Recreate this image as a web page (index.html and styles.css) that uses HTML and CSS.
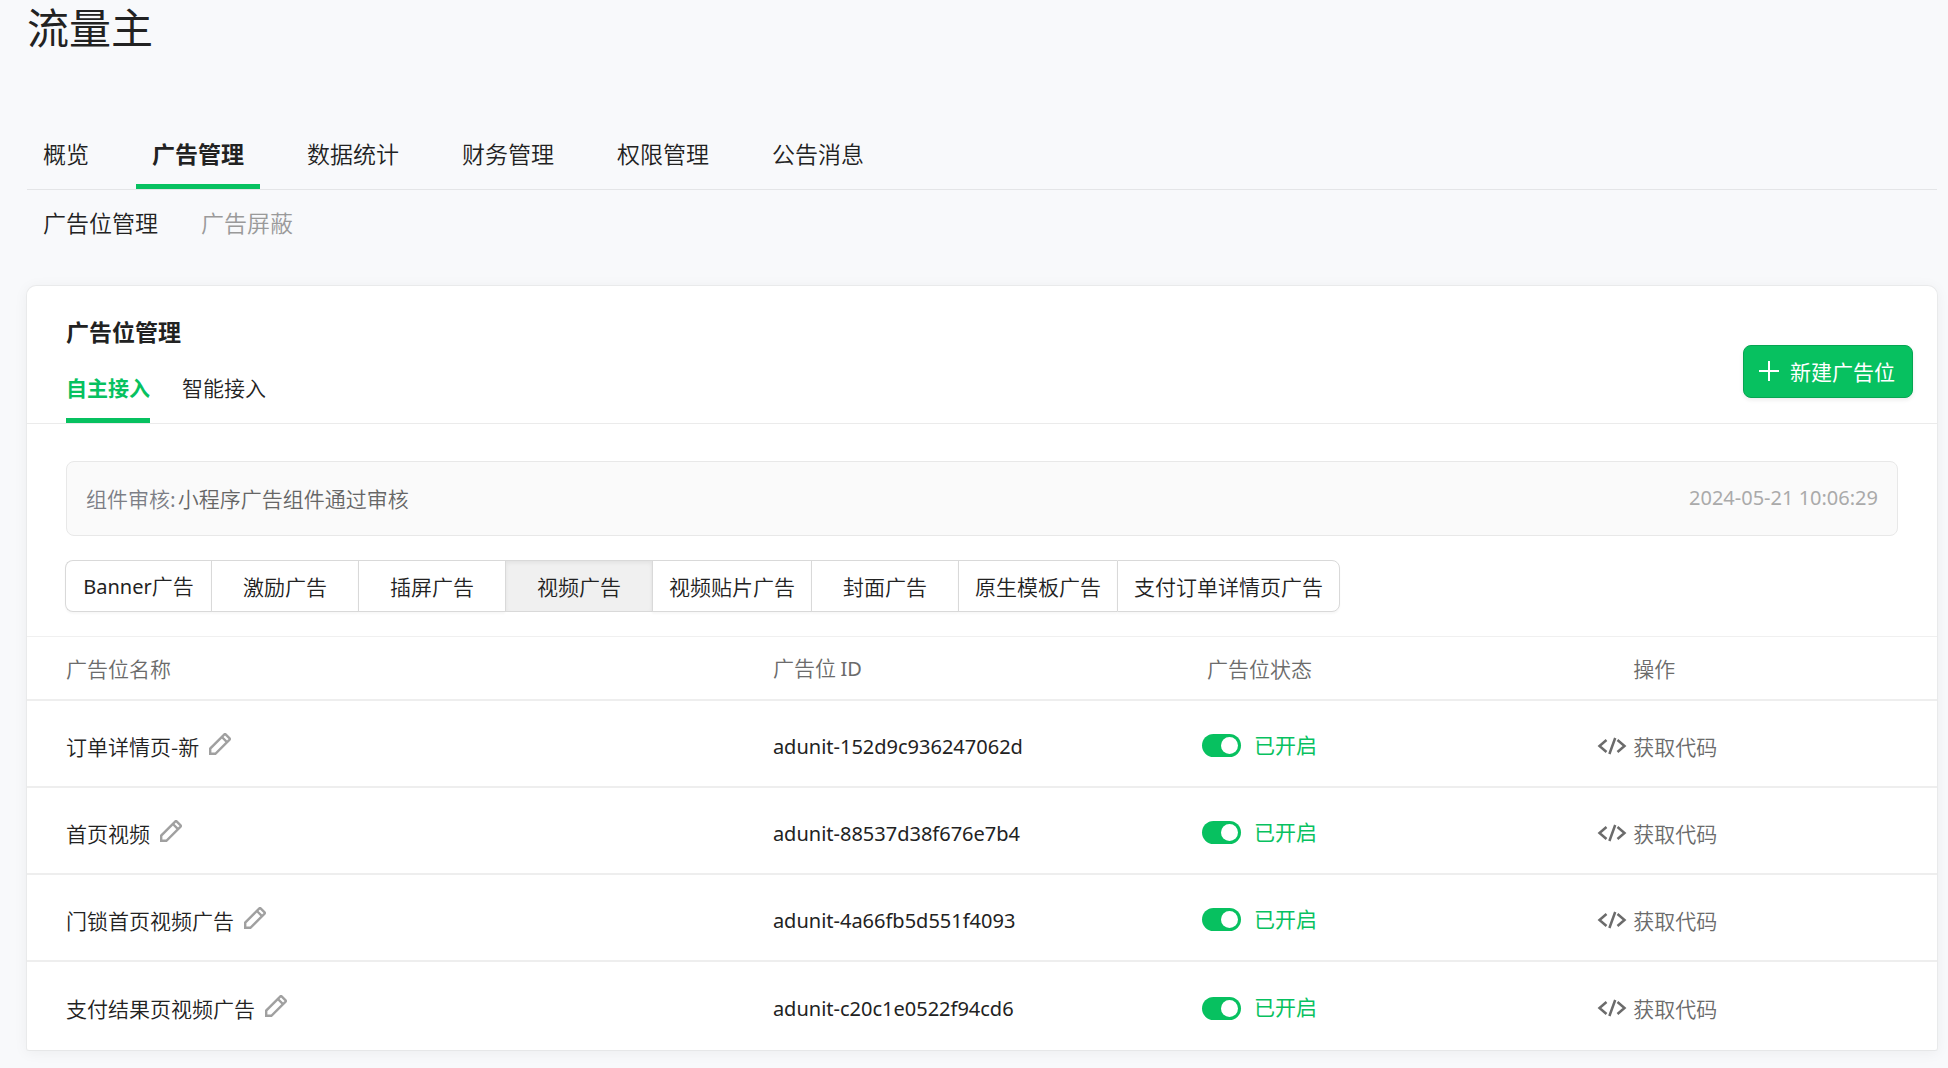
FILE: index.html
```html
<!DOCTYPE html>
<html lang="zh-CN">
<head>
<meta charset="utf-8">
<meta name="viewport" content="width=device-width, initial-scale=1">
<title>流量主</title>
<link rel="stylesheet" href="styles.css">
</head>
<body>
<svg class="sprite" aria-hidden="true">
  <symbol id="icon-pencil" viewBox="0 0 22 22">
    <path d="M1.2 20.8V15.6L15.4 1.4Q16 .8 16.6 1.4L20.6 5.4Q21.2 6 20.6 6.6L6.4 20.8ZM12.9 4L18 9.1" fill="none" stroke="currentColor" stroke-width="2.4"/>
  </symbol>
  <symbol id="icon-code" viewBox="0 0 30 18">
    <path d="M9.5 3L2.5 9L9.5 15M20.5 3L27.5 9L20.5 15M18.2 1L12.4 17" fill="none" stroke="currentColor" stroke-width="2.5"/>
  </symbol>
</svg>
<header class="page-header">
  <h1 class="page-title">流量主</h1>
  <nav class="main-nav">
    <a class="main-nav__item" href="#">概览</a>
    <a class="main-nav__item main-nav__item--active" href="#">广告管理</a>
    <a class="main-nav__item" href="#">数据统计</a>
    <a class="main-nav__item" href="#">财务管理</a>
    <a class="main-nav__item" href="#">权限管理</a>
    <a class="main-nav__item" href="#">公告消息</a>
  </nav>
  <nav class="sub-nav">
    <a class="sub-nav__item sub-nav__item--active" href="#">广告位管理</a>
    <a class="sub-nav__item" href="#">广告屏蔽</a>
  </nav>
</header>
<main class="card">
  <div class="card__header">
    <div>
      <h2 class="card__title">广告位管理</h2>
      <nav class="card-tabs">
        <a class="card-tabs__item card-tabs__item--active" href="#">自主接入</a>
        <a class="card-tabs__item" href="#">智能接入</a>
      </nav>
    </div>
    <button class="create-button" type="button">
      <svg class="create-button__icon" viewBox="0 0 20 20" aria-hidden="true"><path d="M10 0V20M0 10H20" stroke="currentColor" stroke-width="2"/></svg>
      新建广告位
    </button>
  </div>
  <div class="notice">
    <p class="notice__text"><span class="notice__label">组件审核:</span>小程序广告组件通过审核</p>
    <time class="notice__time latin">2024-05-21 10:06:29</time>
  </div>
  <div class="segments">
    <button class="segments__item" type="button"><span class="latin">Banner</span>广告</button>
    <button class="segments__item" type="button">激励广告</button>
    <button class="segments__item" type="button">插屏广告</button>
    <button class="segments__item segments__item--active" type="button">视频广告</button>
    <button class="segments__item" type="button">视频贴片广告</button>
    <button class="segments__item" type="button">封面广告</button>
    <button class="segments__item" type="button">原生模板广告</button>
    <button class="segments__item" type="button">支付订单详情页广告</button>
  </div>
  <table class="units">
    <thead>
      <tr>
        <th class="col-name">广告位名称</th>
        <th class="col-id">广告位 <span class="latin">ID</span></th>
        <th class="col-status">广告位状态</th>
        <th class="col-action">操作</th>
      </tr>
    </thead>
    <tbody>
      <tr>
        <td class="col-name"><span class="unit-name">订单详情页-新<button class="edit-button" type="button" aria-label="编辑"><svg class="edit-button__icon"><use href="#icon-pencil"/></svg></button></span></td>
        <td class="col-id latin">adunit-152d9c936247062d</td>
        <td class="col-status"><label class="switch"><input class="switch__input" type="checkbox" checked><span class="switch__text">已开启</span></label></td>
        <td class="col-action"><a class="code-link" href="#"><svg class="code-link__icon"><use href="#icon-code"/></svg>获取代码</a></td>
      </tr>
      <tr>
        <td class="col-name"><span class="unit-name">首页视频<button class="edit-button" type="button" aria-label="编辑"><svg class="edit-button__icon"><use href="#icon-pencil"/></svg></button></span></td>
        <td class="col-id latin">adunit-88537d38f676e7b4</td>
        <td class="col-status"><label class="switch"><input class="switch__input" type="checkbox" checked><span class="switch__text">已开启</span></label></td>
        <td class="col-action"><a class="code-link" href="#"><svg class="code-link__icon"><use href="#icon-code"/></svg>获取代码</a></td>
      </tr>
      <tr>
        <td class="col-name"><span class="unit-name">门锁首页视频广告<button class="edit-button" type="button" aria-label="编辑"><svg class="edit-button__icon"><use href="#icon-pencil"/></svg></button></span></td>
        <td class="col-id latin">adunit-4a66fb5d551f4093</td>
        <td class="col-status"><label class="switch"><input class="switch__input" type="checkbox" checked><span class="switch__text">已开启</span></label></td>
        <td class="col-action"><a class="code-link" href="#"><svg class="code-link__icon"><use href="#icon-code"/></svg>获取代码</a></td>
      </tr>
      <tr>
        <td class="col-name"><span class="unit-name">支付结果页视频广告<button class="edit-button" type="button" aria-label="编辑"><svg class="edit-button__icon"><use href="#icon-pencil"/></svg></button></span></td>
        <td class="col-id latin">adunit-c20c1e0522f94cd6</td>
        <td class="col-status"><label class="switch"><input class="switch__input" type="checkbox" checked><span class="switch__text">已开启</span></label></td>
        <td class="col-action"><a class="code-link" href="#"><svg class="code-link__icon"><use href="#icon-code"/></svg>获取代码</a></td>
      </tr>
    </tbody>
  </table>
</main>
</body>
</html>
```

FILE: styles.css
```css
:root {
  --green: #07c160;
  --text: #222;
  --muted: #6b6b6b;
  --line: #e4e5e7;
}

* {
  box-sizing: border-box;
}

body {
  margin: 0;
  padding: 0 10px 18px 26px;
  background: #f8f9fb;
  color: var(--text);
  font-family: "Noto Sans CJK SC", sans-serif;
  font-size: 21px;
  font-weight: 350;
  line-height: 32px;
}

h1, h2, p {
  margin: 0;
}

a {
  color: inherit;
  text-decoration: none;
}

button {
  margin: 0;
  padding: 0;
  border: 0;
  background: none;
  color: inherit;
  font: inherit;
  cursor: pointer;
}

.sprite {
  display: none;
}

.latin {
  font-family: "Noto Sans", "Noto Sans CJK SC", sans-serif;
  font-size: 20px;
  font-weight: 400;
}

.page-header {
  padding: 0 1px;
}

.page-title {
  font-size: 42px;
  font-weight: 400;
  line-height: 52px;
}

.main-nav {
  display: flex;
  gap: 31px;
  margin-top: 85px;
  border-bottom: 1px solid var(--line);
  font-size: 23px;
}

.main-nav__item {
  padding: 0 16px 15px;
  border-bottom: 5px solid transparent;
}

.main-nav__item--active {
  border-color: var(--green);
  font-weight: 700;
}

.sub-nav {
  display: flex;
  gap: 43px;
  padding: 16px 16px 0;
  color: #9a9a9a;
  font-size: 23px;
}

.sub-nav__item--active {
  color: var(--text);
}

.card {
  margin-top: 47px;
  border: 1px solid #e9eaeb;
  border-bottom-color: #e6e7e8;
  border-radius: 10px 10px 3px 3px;
  background: #fff;
  box-shadow: 0 2px 14px rgba(0, 0, 0, 0.05);
}

.card__header {
  display: flex;
  justify-content: space-between;
  align-items: flex-end;
  padding: 29px 24px 0 39px;
  border-bottom: 1px solid #ebebeb;
}

.card__title {
  font-size: 23px;
  font-weight: 700;
}

.card-tabs {
  display: flex;
  gap: 32px;
  margin-top: 24px;
}

.card-tabs__item {
  padding-bottom: 15px;
  border-bottom: 5px solid transparent;
}

.card-tabs__item--active {
  border-color: var(--green);
  color: var(--green);
  font-weight: 700;
}

.create-button {
  display: flex;
  align-items: center;
  gap: 11px;
  height: 53px;
  margin-bottom: 25px;
  padding: 0 17px 2px 15px;
  border: 1px solid #06a552;
  border-radius: 8px;
  background: var(--green);
  box-shadow: 0 2px 4px rgba(0, 0, 0, 0.08);
  color: #fff;
  font-weight: 400;
}

.create-button__icon {
  width: 20px;
  height: 20px;
}

.notice {
  display: flex;
  justify-content: space-between;
  align-items: center;
  margin: 37px 39px 0;
  padding: 20px 19px 21px;
  border: 1px solid #e8e8e8;
  border-radius: 8px;
  background: #fafafa;
}

.notice__text {
  color: #666;
}

.notice__label {
  margin-right: 2px;
  color: #7c7e86;
}

.notice__time {
  color: #aaa;
}

.segments {
  display: flex;
  margin: 24px 38px;
}

.segments__item {
  min-width: 147px;
  height: 52px;
  padding: 0 16px;
  border: 1px solid #d9d9d9;
  border-right-width: 0;
  background: #fff;
  box-shadow: 0 2px 2px rgba(0, 0, 0, 0.03);
}

.segments__item:first-child {
  min-width: 146px;
  padding: 0;
  border-radius: 8px 0 0 8px;
}

.segments__item:last-child {
  border-right-width: 1px;
  border-radius: 0 8px 8px 0;
}

.segments__item--active {
  background: #f0f0f0;
  box-shadow: inset 0 2px 4px rgba(0, 0, 0, 0.06);
}

.units {
  width: 100%;
  table-layout: fixed;
  border-top: 1px solid #f0f0f0;
  border-spacing: 0;
}

.units th {
  height: 64px;
  padding: 0;
  border-bottom: 2px solid #eee;
  color: var(--muted);
  font-weight: 350;
  text-align: left;
}

.units td {
  height: 87px;
  padding: 4px 0 0;
  border-bottom: 2px solid #eee;
}

.units td.col-id {
  padding-top: 6px;
}

.units tr:last-child td {
  height: 88px;
  border-bottom: 0;
}

.units .col-name {
  width: 39%;
  padding-left: 39px;
}

.units .col-id {
  width: 22%;
  padding-left: 1px;
}

.units .col-status {
  width: 21%;
  padding-left: 10px;
}

.units th.col-status {
  padding-left: 15px;
}

.units .col-action {
  padding-left: 4px;
}

.units th.col-action {
  padding-left: 40px;
}

.unit-name {
  display: flex;
  align-items: center;
  gap: 10px;
}

.edit-button {
  display: flex;
  padding-bottom: 4px;
  color: #a0a0a0;
}

.edit-button__icon {
  width: 22px;
  height: 22px;
}

.switch {
  display: flex;
  align-items: center;
  gap: 13px;
  color: var(--green);
}

.switch__input {
  display: flex;
  width: 39px;
  height: 23px;
  margin: 0;
  padding: 3px;
  border-radius: 12px;
  background: var(--green);
  appearance: none;
}

.switch__input::before {
  width: 17px;
  height: 17px;
  border-radius: 50%;
  background: #fff;
  content: "";
}

.switch__input:checked {
  justify-content: flex-end;
}

.switch__text {
  padding-bottom: 4px;
  font-weight: 400;
}

.code-link {
  display: flex;
  align-items: center;
  gap: 6px;
  color: var(--muted);
}

.code-link__icon {
  width: 30px;
  height: 18px;
}
```
